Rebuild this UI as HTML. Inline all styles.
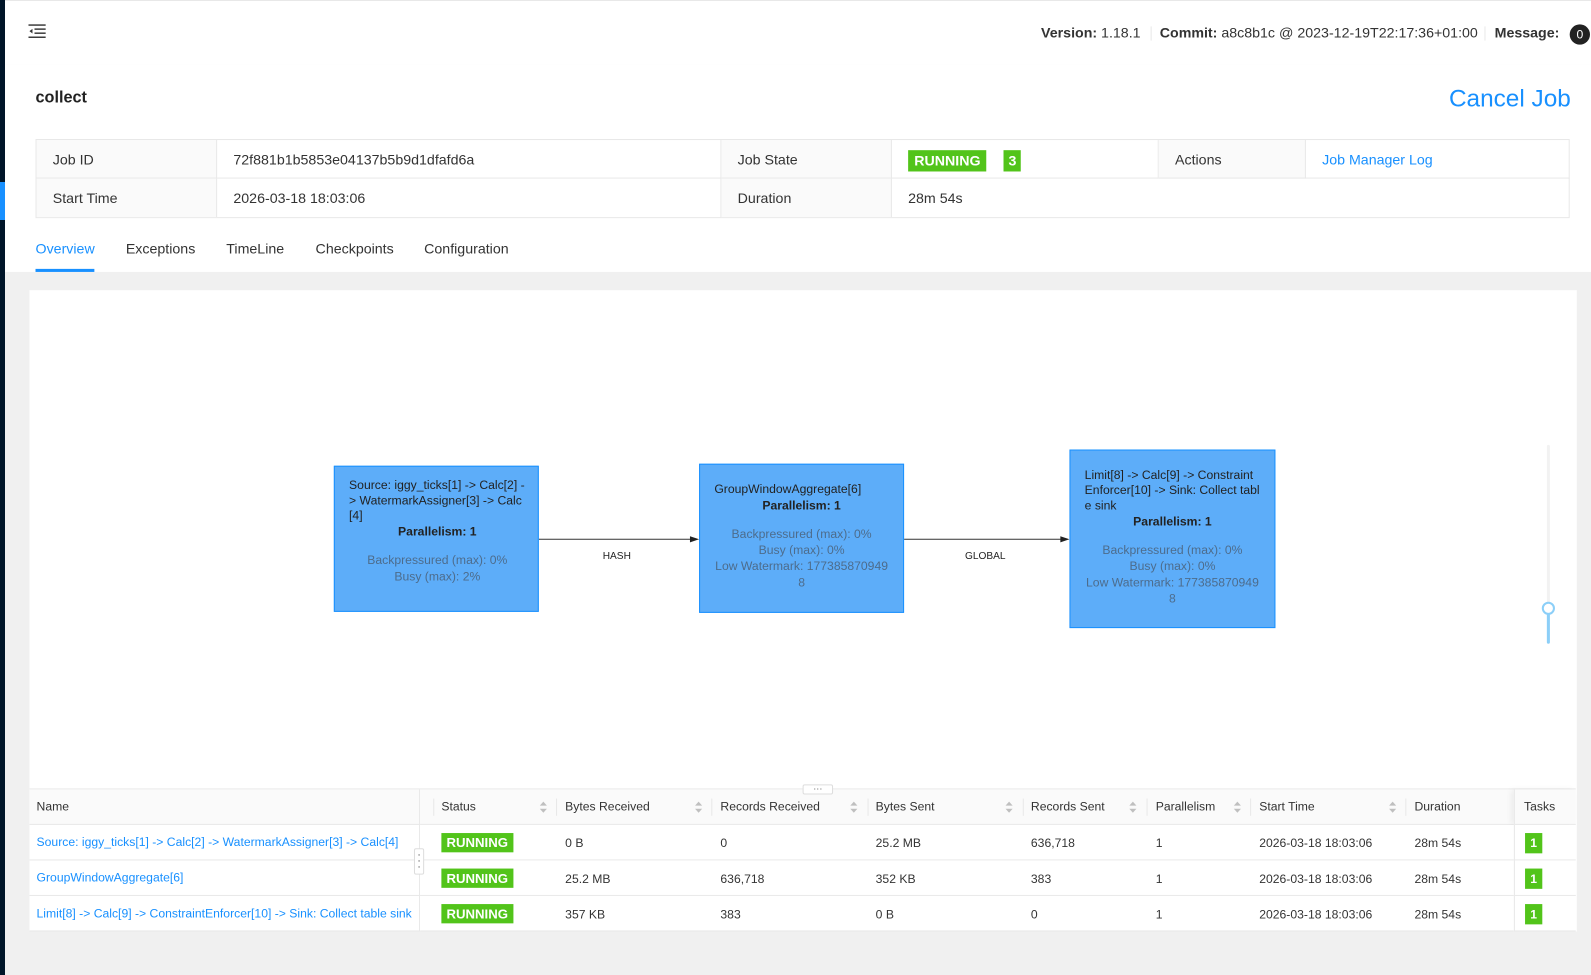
<!DOCTYPE html>
<html><head><meta charset="utf-8"><style>
*{margin:0;padding:0;box-sizing:border-box}
body{width:1591px;height:975px;background:#f0f0f0;font-family:"Liberation Sans",sans-serif;font-size:14px;color:#333;position:relative;overflow:hidden}
#w{position:absolute;left:0;top:0;width:1568px;height:961px;transform:scale(1.01467);transform-origin:0 0}
.a{position:absolute}
.side{left:0;top:0;width:5px;height:975px;background:#001529}
.hdr{left:5px;top:0;width:1586px;height:64px;background:#fff;box-shadow:0 1px 4px rgba(0,21,41,.08);border-top:1px solid #e8e8e8}
.main{left:5px;top:64px;width:1586px;height:204px;background:#fff}
.g{background:#52c41a;color:#fff;font-weight:bold;text-align:center}
.info{left:35px;top:137px;width:1512px;height:78px;border:1px solid #e8e8e8}
.info div{position:absolute;height:38px;line-height:38px}
.lbl{background:#fafafa}
.tabs span{position:absolute;top:237px;font-size:14px}
.panel{left:29px;top:286px;width:1525px;height:632px;background:#fff}
.node{position:absolute;background:#5dadf9;border:1px solid #1890ff;font-size:12px;color:#222;padding:0 14px;line-height:15px;word-break:break-all}
.node .p{font-weight:bold;text-align:center;margin-top:1px}
.node .m{color:#4d6c8c;text-align:center;margin-top:12px;line-height:16px;word-break:break-all}
.el{font-size:10px;color:#222}
.th{position:absolute;top:778px;height:35px;line-height:34px;background:#fafafa;font-size:12px;border-bottom:1px solid #e8e8e8}
.td{position:absolute;font-size:12px;height:35px;line-height:35px;border-bottom:1px solid #e8e8e8}
.lnk{color:#1890ff}
.st{display:inline-block;background:#52c41a;color:#fff;font-weight:bold;font-size:13px;line-height:19px;padding:0 5px;vertical-align:middle}
.tk{display:inline-block;background:#52c41a;color:#fff;font-weight:bold;font-size:12px;width:17px;text-align:center;line-height:20px;vertical-align:middle}
.sep{position:absolute;top:787px;width:1px;height:17px;background:#e8e8e8}
</style></head><body>
<div class="a side"></div>
<div class="a" style="left:0;top:182px;width:5px;height:38px;background:#1890ff"></div>
<div id="w">
<div class="a hdr"></div>
<svg class="a" style="left:28px;top:23px" width="18" height="16" viewBox="0 0 18 16"><rect x="0" y="1" width="17" height="1.4" fill="#333"/><rect x="6" y="5" width="11" height="1.4" fill="#333"/><rect x="6" y="9" width="11" height="1.4" fill="#333"/><rect x="0" y="13" width="17" height="1.4" fill="#333"/><path d="M1 7.7 L4 5.5 L4 10 Z" fill="#333"/></svg>
<div class="a" style="left:1026px;top:24px;font-size:14px"><b>Version:</b> 1.18.1</div>
<div class="a" style="left:1134px;top:26px;width:1px;height:14px;background:#e8e8e8"></div>
<div class="a" style="left:1143px;top:24px;font-size:14px"><b>Commit:</b> a8c8b1c @ 2023-12-19T22:17:36+01:00</div>
<div class="a" style="left:1463px;top:26px;width:1px;height:14px;background:#e8e8e8"></div>
<div class="a" style="left:1473px;top:24px;font-size:14px"><b>Message:</b></div>
<div class="a" style="left:1547px;top:24px;width:20px;height:20px;border-radius:10px;background:#222;color:#fff;font-size:12px;text-align:center;line-height:20px">0</div>
<div class="a main"></div>
<div class="a" style="left:35px;top:88px;font-size:16px;font-weight:bold;color:#222">collect</div>
<div class="a" style="left:1428px;top:84px;font-size:24px;color:#1890ff">Cancel Job</div>
<div class="a info">
<div class="lbl" style="left:0;top:0;width:178px;padding-left:16px;border-right:1px solid #e8e8e8;border-bottom:1px solid #e8e8e8">Job ID</div>
<div style="left:178px;top:0;width:497px;padding-left:16px;border-bottom:1px solid #e8e8e8;border-right:1px solid #e8e8e8">72f881b1b5853e04137b5b9d1dfafd6a</div>
<div class="lbl" style="left:675px;top:0;width:168px;padding-left:16px;border-right:1px solid #e8e8e8;border-bottom:1px solid #e8e8e8">Job State</div>
<div style="left:843px;top:0;width:263px;padding-left:16px;border-right:1px solid #e8e8e8;border-bottom:1px solid #e8e8e8"><span class="g" style="display:inline-block;line-height:21px;padding:0 6px;vertical-align:middle">RUNNING</span><span class="g" style="display:inline-block;line-height:21px;width:17px;margin-left:17px;vertical-align:middle">3</span></div>
<div class="lbl" style="left:1106px;top:0;width:145px;padding-left:16px;border-right:1px solid #e8e8e8;border-bottom:1px solid #e8e8e8">Actions</div>
<div style="left:1251px;top:0;width:260px;padding-left:16px;color:#1890ff;border-bottom:1px solid #e8e8e8">Job Manager Log</div>
<div class="lbl" style="left:0;top:38px;width:178px;padding-left:16px;border-right:1px solid #e8e8e8">Start Time</div>
<div style="left:178px;top:38px;width:497px;padding-left:16px;border-right:1px solid #e8e8e8">2026-03-18 18:03:06</div>
<div class="lbl" style="left:675px;top:38px;width:168px;padding-left:16px;border-right:1px solid #e8e8e8">Duration</div>
<div style="left:843px;top:38px;width:300px;padding-left:16px">28m 54s</div>
</div>
<div class="tabs">
<span style="left:35px;color:#1890ff">Overview</span><span style="left:124px">Exceptions</span><span style="left:223px">TimeLine</span><span style="left:311px">Checkpoints</span><span style="left:418px">Configuration</span>
</div>
<div class="a" style="left:35px;top:265px;width:58px;height:3px;background:#1890ff"></div>
<div class="a panel"></div>
<svg class="a" style="left:0;top:0" width="1568" height="961">
<line x1="531" y1="531.5" x2="682" y2="531.5" stroke="#333" stroke-width="1"/><path d="M680 528.5 L689 531.5 L680 534.5Z" fill="#222"/>
<line x1="891" y1="531.5" x2="1047" y2="531.5" stroke="#333" stroke-width="1"/><path d="M1045 528.5 L1054 531.5 L1045 534.5Z" fill="#222"/>
<line x1="1526" y1="440" x2="1526" y2="600" stroke="#f2f2f2" stroke-width="3" stroke-linecap="round"/>
<line x1="1526" y1="605" x2="1526" y2="633" stroke="#8ccff8" stroke-width="3" stroke-linecap="round"/>
<circle cx="1526" cy="599.5" r="5.5" fill="#fff" stroke="#8ccff8" stroke-width="2"/>
</svg>
<div class="a el" style="left:594px;top:543px">HASH</div>
<div class="a el" style="left:951px;top:543px">GLOBAL</div>
<div class="node" style="left:329px;top:459px;width:202px;height:144px;padding:11px 12px 0 14px">Source: iggy_ticks[1] -&gt; Calc[2] -&gt; WatermarkAssigner[3] -&gt; Calc [4]<div class="p">Parallelism: 1</div><div class="m">Backpressured (max): 0%<br>Busy (max): 2%</div></div>
<div class="node" style="left:689px;top:457px;width:202px;height:147px;padding-top:17px">GroupWindowAggregate[6]<div class="p">Parallelism: 1</div><div class="m">Backpressured (max): 0%<br>Busy (max): 0%<br>Low Watermark: 177385870949<br>8</div></div>
<div class="node" style="left:1054px;top:443px;width:203px;height:176px;padding-top:17px">Limit[8] -&gt; Calc[9] -&gt; Constraint Enforcer[10] -&gt; Sink: Collect tabl e sink<div class="p">Parallelism: 1</div><div class="m">Backpressured (max): 0%<br>Busy (max): 0%<br>Low Watermark: 177385870949<br>8</div></div>
<div class="a" style="left:29px;top:777px;width:1524px;height:1px;background:#e8e8e8"></div>
<div class="th" style="left:29px;width:385px;padding-left:7px;border-right:1px solid #e8e8e8">Name</div>
<div class="th" style="left:414px;width:1078px;padding-left:21px">Status</div>
<div class="th" style="left:1492px;width:61px;padding-left:9px;border-left:1px solid #e8e8e8;box-shadow:-3px 0 6px rgba(0,0,0,.06)">Tasks</div>
<div class="a" style="left:791px;top:773px;width:30px;height:10px;background:#fff;border:1px solid #ddd;border-radius:2px;font-size:9px;line-height:6px;text-align:center;color:#555;overflow:hidden">···</div>
<div class="a" style="left:557px;top:788px;font-size:12px">Bytes Received</div>
<div class="a" style="left:710px;top:788px;font-size:12px">Records Received</div>
<div class="a" style="left:863px;top:788px;font-size:12px">Bytes Sent</div>
<div class="a" style="left:1016px;top:788px;font-size:12px">Records Sent</div>
<div class="a" style="left:1139px;top:788px;font-size:12px">Parallelism</div>
<div class="a" style="left:1241px;top:788px;font-size:12px">Start Time</div>
<div class="a" style="left:1394px;top:788px;font-size:12px">Duration</div>
<div class="sep" style="left:427px"></div><div class="sep" style="left:548px"></div><div class="sep" style="left:701px"></div><div class="sep" style="left:855px"></div><div class="sep" style="left:1008px"></div><div class="sep" style="left:1130px"></div><div class="sep" style="left:1232px"></div><div class="sep" style="left:1385px"></div>
<svg class="a" style="left:0;top:0" width="1568" height="961">
<g fill="#bfbfbf">
<path d="M532 794 L535.5 790 L539 794Z M532 797 L535.5 801 L539 797Z"/>
<path d="M685 794 L688.5 790 L692 794Z M685 797 L688.5 801 L692 797Z"/>
<path d="M838 794 L841.5 790 L845 794Z M838 797 L841.5 801 L845 797Z"/>
<path d="M991 794 L994.5 790 L998 794Z M991 797 L994.5 801 L998 797Z"/>
<path d="M1113 794 L1116.5 790 L1120 794Z M1113 797 L1116.5 801 L1120 797Z"/>
<path d="M1216 794 L1219.5 790 L1223 794Z M1216 797 L1219.5 801 L1223 797Z"/>
<path d="M1369 794 L1372.5 790 L1376 794Z M1369 797 L1372.5 801 L1376 797Z"/>
</g></svg>
<div class="td" style="left:29px;top:813px;width:385px;padding-left:7px;border-right:1px solid #e8e8e8" ><span class="lnk">Source: iggy_ticks[1] -&gt; Calc[2] -&gt; WatermarkAssigner[3] -&gt; Calc[4]</span></div>
<div class="td" style="left:29px;top:848px;width:385px;padding-left:7px;border-right:1px solid #e8e8e8"><span class="lnk">GroupWindowAggregate[6]</span></div>
<div class="td" style="left:29px;top:883px;width:385px;padding-left:7px;border-right:1px solid #e8e8e8"><span class="lnk">Limit[8] -&gt; Calc[9] -&gt; ConstraintEnforcer[10] -&gt; Sink: Collect table sink</span></div>
<div class="td" style="left:414px;top:813px;width:1078px;background:#fff"></div>
<div class="td" style="left:414px;top:848px;width:1078px;background:#fff"></div>
<div class="td" style="left:414px;top:883px;width:1078px;background:#fff"></div>
<div class="td" style="left:1492px;top:813px;width:61px;padding-left:10px;border-left:1px solid #e8e8e8;background:#fff"><span class="tk">1</span></div>
<div class="td" style="left:1492px;top:848px;width:61px;padding-left:10px;border-left:1px solid #e8e8e8;background:#fff"><span class="tk">1</span></div>
<div class="td" style="left:1492px;top:883px;width:61px;padding-left:10px;border-left:1px solid #e8e8e8;background:#fff"><span class="tk">1</span></div>
<div class="a" style="left:435px;top:821px"><span class="st">RUNNING</span></div>
<div class="a" style="left:435px;top:856px"><span class="st">RUNNING</span></div>
<div class="a" style="left:435px;top:891px"><span class="st">RUNNING</span></div>
<div class="a" style="left:557px;top:824px;font-size:12px">0 B</div>
<div class="a" style="left:710px;top:824px;font-size:12px">0</div>
<div class="a" style="left:863px;top:824px;font-size:12px">25.2 MB</div>
<div class="a" style="left:1016px;top:824px;font-size:12px">636,718</div>
<div class="a" style="left:1139px;top:824px;font-size:12px">1</div>
<div class="a" style="left:1241px;top:824px;font-size:12px">2026-03-18 18:03:06</div>
<div class="a" style="left:1394px;top:824px;font-size:12px">28m 54s</div>
<div class="a" style="left:557px;top:859px;font-size:12px">25.2 MB</div>
<div class="a" style="left:710px;top:859px;font-size:12px">636,718</div>
<div class="a" style="left:863px;top:859px;font-size:12px">352 KB</div>
<div class="a" style="left:1016px;top:859px;font-size:12px">383</div>
<div class="a" style="left:1139px;top:859px;font-size:12px">1</div>
<div class="a" style="left:1241px;top:859px;font-size:12px">2026-03-18 18:03:06</div>
<div class="a" style="left:1394px;top:859px;font-size:12px">28m 54s</div>
<div class="a" style="left:557px;top:894px;font-size:12px">357 KB</div>
<div class="a" style="left:710px;top:894px;font-size:12px">383</div>
<div class="a" style="left:863px;top:894px;font-size:12px">0 B</div>
<div class="a" style="left:1016px;top:894px;font-size:12px">0</div>
<div class="a" style="left:1139px;top:894px;font-size:12px">1</div>
<div class="a" style="left:1241px;top:894px;font-size:12px">2026-03-18 18:03:06</div>
<div class="a" style="left:1394px;top:894px;font-size:12px">28m 54s</div>
<div class="a" style="left:408px;top:836px;width:10px;height:26px;background:#fff;border:1px solid #ddd;border-radius:2px;font-size:10px;text-align:center;line-height:6px;color:#333;padding-top:3px">·<br>·<br>·</div>
</div>
</body></html>
